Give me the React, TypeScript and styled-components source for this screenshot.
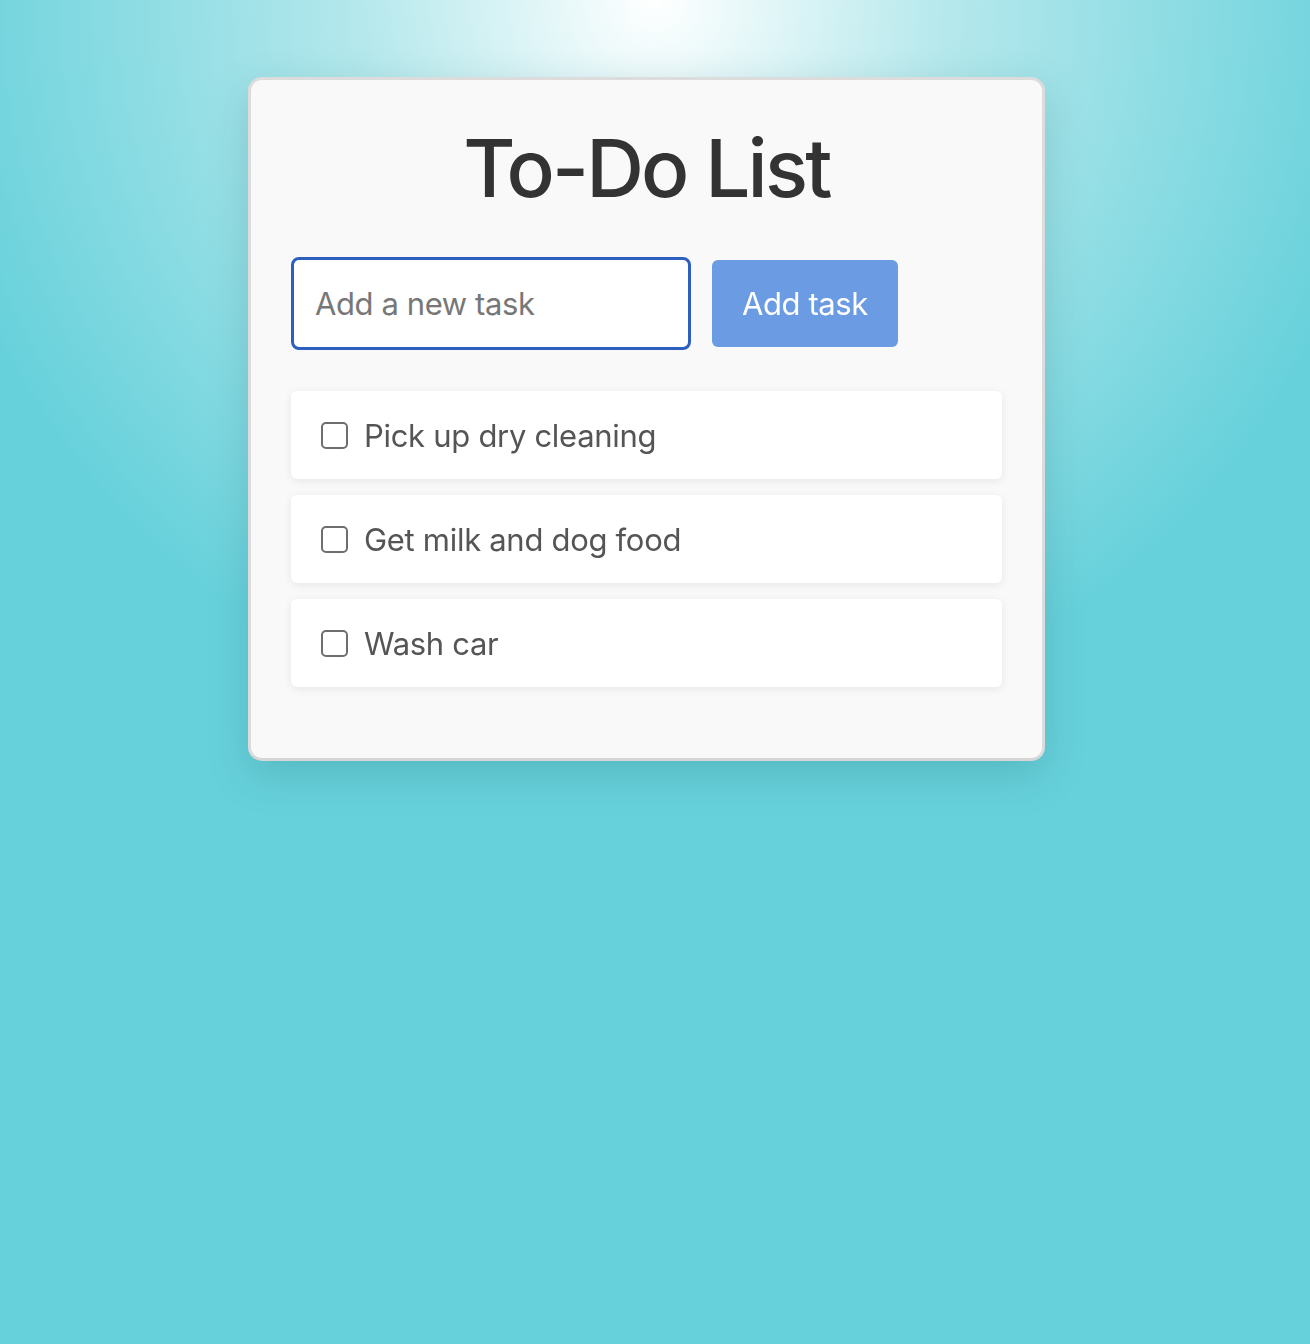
import {useState} from "react";
import styled, {createGlobalStyle} from "styled-components";

const GlobalStyle = createGlobalStyle`
  html, body {
    margin: 0;
    padding: 0;
  }
  body {
    min-height: 1344px;
    font-family: Inter, "Noto Sans", "Liberation Sans", sans-serif;
    background: radial-gradient(circle 740px at 50% 0%, #ffffff 0%, #b4e8ec 40%, #67d1db 100%) no-repeat, #67d1db;
  }
`;

const Page = styled.div`
  padding: 77px 17px 0 0;
`;

const Card = styled.div`
  box-sizing: border-box;
  width: 797px;
  margin: 0 auto;
  padding: 40px 40px 71px;
  background: #f9f9f9;
  border: 3px solid #dcdcdc;
  border-bottom-color: #d6d6d6;
  border-radius: 14px;
  box-shadow: 0 14px 40px rgba(30, 100, 110, 0.22);
`;

const Title = styled.h1`
  margin: 0 0 41px;
  text-align: center;
  font-size: 80px;
  font-weight: 500;
  line-height: 1.2;
  color: #333;
  letter-spacing: -2.8px;
`;

const InputRow = styled.div`
  display: flex;
  align-items: center;
  gap: 21px;
  margin-bottom: 41px;
`;

const TaskInput = styled.input`
  box-sizing: border-box;
  width: 400px;
  height: 93px;
  padding: 0 21px;
  border: 3px solid #2c5fbf;
  border-radius: 8px;
  background: #fff;
  font-family: inherit;
  font-size: 31px;
  letter-spacing: -0.4px;
  color: #333;
  outline: none;
  &::placeholder {
    color: #777;
  }
`;

const AddButton = styled.button`
  height: 87px;
  padding: 0 30px;
  border: none;
  border-radius: 6px;
  background: #6b9be3;
  color: #fff;
  font-family: inherit;
  font-size: 31px;
  letter-spacing: -0.4px;
  cursor: pointer;
`;

const List = styled.ul`
  list-style: none;
  margin: 0;
  padding: 0;
  display: flex;
  flex-direction: column;
  gap: 16px;
`;

const Item = styled.li`
  display: flex;
  align-items: center;
  gap: 16px;
  height: 88px;
  padding: 0 30px;
  background: #fff;
  border-radius: 6px;
  box-shadow: 0 2px 8px rgba(0, 0, 0, 0.08);
  font-size: 31px;
  letter-spacing: -0.3px;
  color: #555;
`;

const Check = styled.input`
  appearance: none;
  box-sizing: border-box;
  width: 27px;
  height: 27px;
  margin: 0;
  border: 2px solid #6e6e6e;
  border-radius: 5px;
  background: #fff;
  flex-shrink: 0;
  &:checked {
    background: #6b9be3;
    border-color: #6b9be3;
  }
`;

const Label = styled.span<{done: boolean}>`
  text-decoration: ${p => (p.done ? "line-through" : "none")};
`;

const initialTasks = [
  {id: 1, text: "Pick up dry cleaning", done: false},
  {id: 2, text: "Get milk and dog food", done: false},
  {id: 3, text: "Wash car", done: false},
];

const App = () => {
  const [tasks, setTasks] = useState(initialTasks);
  const [draft, setDraft] = useState("");

  const addTask = () => {
    if (!draft.trim()) return;
    setTasks([...tasks, {id: Date.now(), text: draft.trim(), done: false}]);
    setDraft("");
  };

  const toggle = (id: number) =>
    setTasks(tasks.map(t => (t.id === id ? {...t, done: !t.done} : t)));

  return (
    <Page>
      <GlobalStyle/>
      <Card>
        <Title>To-Do List</Title>
        <InputRow>
          <TaskInput
            autoFocus
            placeholder="Add a new task"
            value={draft}
            onChange={e => setDraft(e.target.value)}
            onKeyDown={e => e.key === "Enter" && addTask()}
          />
          <AddButton onClick={addTask}>Add task</AddButton>
        </InputRow>
        <List>
          {tasks.map(t => (
            <Item key={t.id}>
              <Check type="checkbox" checked={t.done} onChange={() => toggle(t.id)}/>
              <Label done={t.done}>{t.text}</Label>
            </Item>
          ))}
        </List>
      </Card>
    </Page>
  );
};

export default App;
